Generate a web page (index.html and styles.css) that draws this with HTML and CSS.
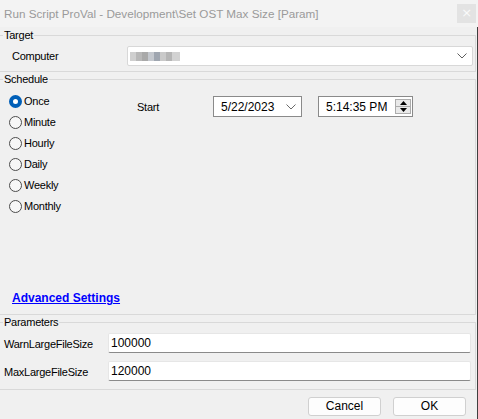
FILE: index.html
```html
<!DOCTYPE html>
<html>
<head>
<meta charset="utf-8">
<link rel="stylesheet" href="styles.css">
</head>
<body>
<div class="window">
  <div class="titlebar">
    <span class="title">Run Script ProVal - Development\Set OST Max Size [Param]</span>
    <span class="close">×</span>
  </div>
  <div class="content">
    <fieldset class="group target">
      <legend>Target</legend>
      <div class="computer-row">
        <span class="field-label">Computer</span>
        <div class="combo">
          <span class="blurred"></span>
          <svg class="chev" width="10" height="6" viewBox="0 0 10 6"><path d="M0.5 0.5 L5 5 L9.5 0.5" fill="none" stroke="#5f5f5f" stroke-width="1"/></svg>
        </div>
      </div>
    </fieldset>
    <fieldset class="group schedule">
      <legend>Schedule</legend>
      <div class="sched-inner">
        <div class="sched-main">
          <div class="radios">
            <div class="radio-row"><span class="radio checked"></span><span>Once</span></div>
            <div class="radio-row"><span class="radio"></span><span>Minute</span></div>
            <div class="radio-row"><span class="radio"></span><span>Hourly</span></div>
            <div class="radio-row"><span class="radio"></span><span>Daily</span></div>
            <div class="radio-row"><span class="radio"></span><span>Weekly</span></div>
            <div class="radio-row"><span class="radio"></span><span>Monthly</span></div>
          </div>
          <div class="start-row">
            <span class="start-label">Start</span>
            <div class="picker date">
              <span>5/22/2023</span>
              <svg class="chev" width="10" height="6" viewBox="0 0 10 6"><path d="M0.5 0.5 L5 5 L9.5 0.5" fill="none" stroke="#6a6a6a" stroke-width="1"/></svg>
            </div>
            <div class="picker time">
              <span>5:14:35 PM</span>
              <div class="spin">
                <div class="spin-btn"><svg width="7" height="4" viewBox="0 0 7 4"><path d="M3.5 0 L7 4 L0 4 Z" fill="#000"/></svg></div>
                <div class="spin-btn"><svg width="7" height="4" viewBox="0 0 7 4"><path d="M0 0 L7 0 L3.5 4 Z" fill="#000"/></svg></div>
              </div>
            </div>
          </div>
        </div>
        <a class="adv" href="#">Advanced Settings</a>
      </div>
    </fieldset>
    <fieldset class="group params">
      <legend>Parameters</legend>
      <div class="param-row">
        <span class="param-label">WarnLargeFileSize</span>
        <div class="textbox">100000</div>
      </div>
      <div class="param-row">
        <span class="param-label">MaxLargeFileSize</span>
        <div class="textbox">120000</div>
      </div>
    </fieldset>
    <div class="buttons">
      <div class="btn">Cancel</div>
      <div class="btn">OK</div>
    </div>
  </div>
</div>
</body>
</html>
```
FILE: styles.css
```css
html, body {
  margin: 0;
  padding: 0;
}
body {
  width: 478px;
  height: 419px;
  overflow: hidden;
  background: #f0f0f0;
  font-family: "Liberation Sans", Arial, sans-serif;
  font-size: 11px;
  letter-spacing: -0.25px;
  color: #000;
}
.window {
  display: flex;
  flex-direction: column;
  width: 478px;
  height: 419px;
}
.titlebar {
  height: 27px;
  background: #f3f3f3;
  display: flex;
  align-items: center;
  justify-content: space-between;
  padding: 0 2px 0 4px;
  box-sizing: border-box;
}
.title {
  font-family: "Liberation Sans", Arial, sans-serif;
  font-size: 11.7px;
  letter-spacing: 0;
  color: #9a9a9a;
  margin-top: -1px;
}
.close {
  width: 19px;
  height: 19px;
  background: #e3e3e3;
  color: #fafafa;
  font-size: 13px;
  line-height: 18px;
  text-align: center;
  font-family: "DejaVu Sans", sans-serif;
}
.content {
  flex: 1;
  border-right: 1px solid #3f3f3f;
  display: flex;
  flex-direction: column;
}
.group {
  margin: 0 1px 0 0;
  padding: 0;
  border: 1px solid #d9d9d9;
  border-left: 0;
  min-width: 0;
}
.group legend {
  margin-left: 3px;
  padding: 0 1px;
  line-height: 15px;
  font-size: 11px;
}
.target {
  margin-top: 1px;
}
.computer-row {
  display: flex;
  align-items: center;
  padding: 3px 0 5px 12px;
}
.field-label {
  width: 115px;
}
.combo {
  width: 346px;
  height: 20px;
  box-sizing: border-box;
  background: #fff;
  border: 1px solid #d8d8d8;
  border-radius: 2px;
  display: flex;
  align-items: center;
  justify-content: space-between;
  padding: 0 5px 0 2px;
}
.blurred {
  width: 50px;
  height: 9px;
  background: linear-gradient(90deg, #cfcfcf 0 6px, #b8b8b8 6px 12px, #a9a9a9 12px 18px, #c4c8ce 18px 24px, #9fa6b0 24px 30px, #c9c9c9 30px 36px, #b5b5b5 36px 42px, #d2d2d2 42px 50px);
  filter: blur(0.4px);
}
.sched-inner {
  height: 227px;
  display: flex;
  flex-direction: column;
  justify-content: space-between;
  box-sizing: border-box;
  padding: 4px 0 9px 0;
}
.sched-main {
  display: flex;
}
.radios {
  width: 137px;
  padding-left: 9px;
  box-sizing: border-box;
  display: flex;
  flex-direction: column;
}
.radio-row {
  height: 21px;
  display: flex;
  align-items: center;
  line-height: 13px;
}
.radio {
  width: 13px;
  height: 13px;
  box-sizing: border-box;
  border: 1px solid #4c4c4c;
  border-radius: 50%;
  margin-right: 2px;
  background: #f7f7f7;
}
.radio.checked {
  border: 4px solid #005fb8;
  background: #fff;
}
.start-row {
  display: flex;
  align-items: flex-start;
  margin-top: 5px;
}
.start-label {
  width: 76px;
  padding-top: 5px;
}
.picker {
  height: 21px;
  box-sizing: border-box;
  border: 1px solid #8a8a8a;
  background: #fff;
  display: flex;
  align-items: center;
  justify-content: space-between;
  font-size: 12px;
  letter-spacing: 0;
}
.date {
  width: 89px;
  padding: 0 5px 0 7px;
}
.time {
  width: 95px;
  margin-left: 16px;
  padding: 0 1px 0 7px;
}
.spin {
  width: 16px;
  height: 15px;
  display: flex;
  flex-direction: column;
  border: 1px solid #acacac;
  box-sizing: border-box;
  background: #e9e9e9;
}
.spin-btn {
  flex: 1;
  display: flex;
  align-items: center;
  justify-content: center;
}
.spin-btn + .spin-btn {
  border-top: 1px solid #acacac;
}
.adv {
  margin-left: 12px;
  font-weight: bold;
  font-size: 12px;
  letter-spacing: 0;
  line-height: 14px;
  color: #0000ff;
  text-decoration: underline;
  align-self: flex-start;
}
.params {
  padding: 3px 0 8px 0;
}
.param-row {
  display: flex;
  align-items: center;
  padding-left: 4px;
  height: 20px;
}
.param-row + .param-row {
  margin-top: 8px;
}
.param-label {
  width: 104px;
  padding-top: 2px;
}
.textbox {
  width: 363px;
  height: 20px;
  box-sizing: border-box;
  background: #fff;
  border: 1px solid #e6e6e6;
  border-bottom: 1px solid #8a8a8a;
  border-radius: 2px;
  padding: 2px 2px 0;
  font-size: 12px;
  letter-spacing: 0;
  line-height: 15px;
}
.buttons {
  display: flex;
  justify-content: flex-end;
  gap: 12px;
  margin-top: 7px;
  padding-right: 11px;
}
.btn {
  width: 73px;
  height: 19px;
  box-sizing: border-box;
  border: 1px solid #d0d0d0;
  border-radius: 3px;
  background: #fdfdfd;
  text-align: center;
  line-height: 17px;
  font-size: 12px;
  letter-spacing: 0;
}
```
